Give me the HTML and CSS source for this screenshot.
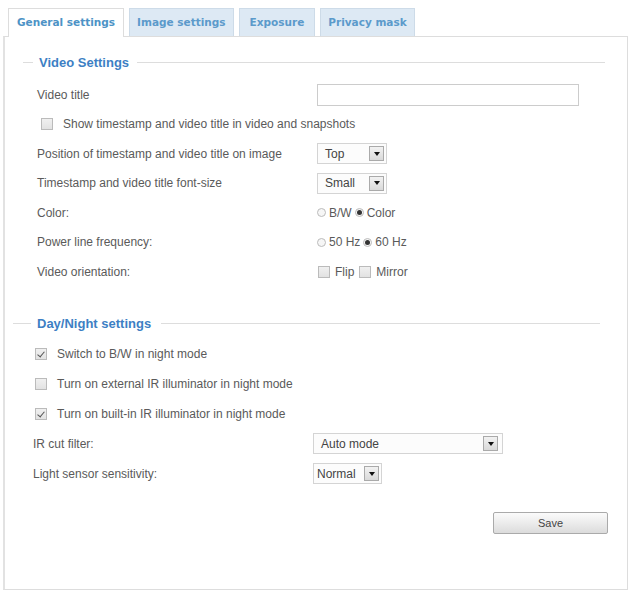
FILE: index.html
```html
<!DOCTYPE html>
<html lang="en">
<head>
  <meta charset="UTF-8" />
  <title>General settings</title>
  <link rel="stylesheet" href="styles.css">
</head>
<body>
  <div class="page">
    <ul class="tabs">
      <li class="tab active">General settings</li>
      <li class="tab">Image settings</li>
      <li class="tab">Exposure</li>
      <li class="tab">Privacy mask</li>
    </ul>

    <div class="panel">
      <fieldset class="group video">
        <legend>Video Settings</legend>

        <div class="row">
          <label class="name">Video title</label>
          <input type="text" class="text" />
        </div>
        <div class="row check">
          <span class="box"></span>
          <span>Show timestamp and video title in video and snapshots</span>
        </div>
        <div class="row">
          <label class="name">Position of timestamp and video title on image</label>
          <div class="select w-small"><span class="value">Top</span><span class="arrow"></span></div>
        </div>
        <div class="row">
          <label class="name">Timestamp and video title font-size</label>
          <div class="select w-small"><span class="value">Small</span><span class="arrow"></span></div>
        </div>
        <div class="row">
          <label class="name">Color:</label>
          <div class="options">
            <span class="radio"></span><span>B/W</span>
            <span class="radio on"></span><span>Color</span>
          </div>
        </div>
        <div class="row">
          <label class="name">Power line frequency:</label>
          <div class="options">
            <span class="radio"></span><span>50 Hz</span>
            <span class="radio on"></span><span>60 Hz</span>
          </div>
        </div>
        <div class="row">
          <label class="name">Video orientation:</label>
          <div class="options wide">
            <span class="box"></span><span>Flip</span>
            <span class="box"></span><span>Mirror</span>
          </div>
        </div>
      </fieldset>

      <fieldset class="group daynight">
        <legend>Day/Night settings</legend>

        <div class="row check">
          <span class="box on"></span>
          <span>Switch to B/W in night mode</span>
        </div>
        <div class="row check">
          <span class="box"></span>
          <span>Turn on external IR illuminator in night mode</span>
        </div>
        <div class="row check">
          <span class="box on"></span>
          <span>Turn on built-in IR illuminator in night mode</span>
        </div>
        <div class="row">
          <label class="name">IR cut filter:</label>
          <div class="select w-large"><span class="value">Auto mode</span><span class="arrow"></span></div>
        </div>
        <div class="row">
          <label class="name">Light sensor sensitivity:</label>
          <div class="select w-tight"><span class="value">Normal</span><span class="arrow"></span></div>
        </div>
      </fieldset>

      <div class="actions">
        <button type="button" class="save">Save</button>
      </div>
    </div>
  </div>
</body>
</html>
```

FILE: styles.css
```css
* {
  box-sizing: border-box;
}
body {
  margin: 0;
  background: #fff;
  font-family: 'Liberation Sans', Arial, sans-serif;
  font-size: 12px;
  color: #5a5a5a;
}
.page {
  padding: 8px 6px 0 3px;
}

/* tab strip */
.tabs {
  display: flex;
  gap: 5px;
  list-style: none;
  margin: 0 0 -1px 5px;
  padding: 0;
  position: relative;
  z-index: 1;
}
.tab {
  height: 28px;
  padding: 0 7px;
  background: #dde9f4;
  border: 1px solid #cddbe8;
  border-bottom: none;
  font: bold 10.5px 'DejaVu Sans', Verdana, sans-serif;
  line-height: 27px;
  color: #5b9acb;
}
.tab:nth-child(3) {
  padding: 0 10px;
}
.tab.active {
  height: 29px;
  padding: 0 8px;
  background: #fff;
  border-color: #ddd;
  color: #4d93c6;
}

.panel {
  border: 1px solid #ddd;
  border-left: 2px solid #e2e2e2;
  padding: 18px 0 55px 0;
  height: 554px;
}

/* sections */
.group {
  border: none;
  border-top: 1px solid #ddd;
  margin: 0;
  padding: 0;
}
.group legend {
  font-size: 13px;
  font-weight: bold;
  line-height: 15px;
  color: #3d7fc4;
}
.video {
  margin: 0 22px 0 18px;
  padding: 10px 0 0 14px;
}
.video legend {
  margin-left: -4px;
  padding: 0 8px 0 6px;
}
.daynight {
  margin: 29px 27px 0 8px;
  padding: 8px 0 0 20px;
}
.daynight legend {
  margin-left: -2px;
  padding: 0 10px 0 6px;
}

/* form rows */
.row {
  display: flex;
  align-items: center;
  height: 29.5px;
}
.daynight .row {
  height: 30px;
}
.name {
  width: 280px;
  flex: none;
}
.row.check {
  gap: 10px;
  padding-left: 4px;
}
.daynight .row.check {
  padding-left: 2px;
}

.text {
  width: 262px;
  height: 22px;
  border: 1px solid #ccc;
  background: #fff;
  margin: 0;
}

.select {
  display: flex;
  align-items: center;
  justify-content: space-between;
  height: 21px;
  padding: 0 2px 0 7px;
  border: 1px solid #d4d4d4;
  background: #fcfcfc;
  color: #444;
}
.w-small {
  width: 70px;
}
.w-large {
  width: 190px;
  padding-right: 4px;
}
.w-tight {
  width: 69px;
  padding-left: 3px;
}
.arrow {
  width: 15px;
  height: 15px;
  flex: none;
  border: 1px solid #aaa;
  background: linear-gradient(#f2f2f2, #d9d9d9);
  display: flex;
  align-items: center;
  justify-content: center;
}
.arrow::after {
  content: '';
  border-left: 3px solid transparent;
  border-right: 3px solid transparent;
  border-top: 4px solid #111;
}

.options {
  display: flex;
  align-items: center;
  gap: 3px;
}
.options.wide {
  gap: 5px;
  padding-left: 1px;
}
.radio {
  width: 9px;
  height: 9px;
  border-radius: 50%;
  border: 1px solid #bbb;
  background: #f6f6f6;
  display: inline-flex;
  align-items: center;
  justify-content: center;
}
.radio.on::after {
  content: '';
  width: 5px;
  height: 5px;
  border-radius: 50%;
  background: #333;
}
.box {
  width: 12px;
  height: 12px;
  flex: none;
  border: 1px solid #bbb;
  background: linear-gradient(#f0f0f0, #e2e2e2);
  position: relative;
}
.box.on::after {
  content: '';
  position: absolute;
  left: 3px;
  top: 1px;
  width: 3px;
  height: 6px;
  border-right: 1.5px solid #555;
  border-bottom: 1.5px solid #555;
  transform: rotate(40deg);
}

.actions {
  display: flex;
  justify-content: flex-end;
  margin: 23px 19px 0 0;
}
.save {
  width: 115px;
  height: 22px;
  border: 1px solid #aaa;
  border-radius: 2px;
  background: linear-gradient(#fbfbfb, #dcdcdc);
  font-family: inherit;
  font-size: 11px;
  color: #444;
}
```
